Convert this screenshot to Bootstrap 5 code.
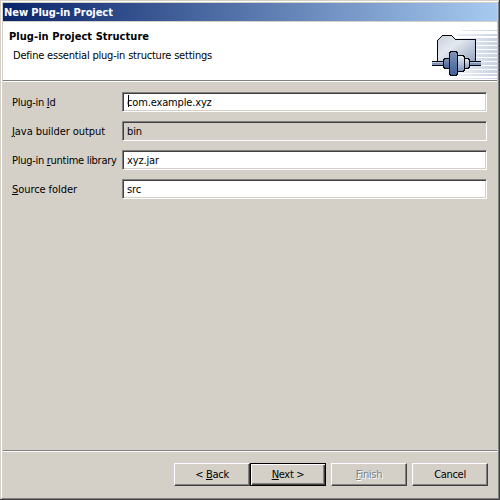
<!DOCTYPE html>
<html lang="en">
<head>
<meta charset="utf-8">
<meta name="viewport" content="width=device-width, initial-scale=1">
<title>New Plug-in Project</title>
<link rel="stylesheet" href="https://cdn.jsdelivr.net/npm/bootstrap@5.3.0/dist/css/bootstrap.min.css">
<style>
:root{--face:#d4d0c8;--shade:#808080;--dark:#404040}
body{margin:0;background:var(--face);font-family:"DejaVu Sans Condensed","DejaVu Sans",sans-serif;font-stretch:condensed;font-size:11px;line-height:14px;color:#000;letter-spacing:-.28px}
u{text-underline-offset:1px;text-decoration-thickness:1px}
.dialog{width:500px;height:500px;background:var(--face);padding:1px 0 0 1px;border-right:1px solid var(--dark);border-bottom:1px solid var(--dark)}
.dialog-inner{height:498px;border:1px solid;border-color:#fff var(--shade) var(--shade) #fff;padding:1px}
.titlebar{height:18px;background:linear-gradient(90deg,#0a246a,#a6caf0);color:#fff;font-weight:bold;padding:1px 0 0 1px;letter-spacing:-.06px}
.banner{height:59px;margin-top:1px;background:#fff;border-bottom:1px solid var(--shade);box-shadow:0 1px #fff;padding:8px 0 0 6px}
.banner h1{font-size:11px;line-height:14px;font-weight:bold;margin:0 0 5px;letter-spacing:.05px}
.banner p{margin:0 0 0 4px;letter-spacing:-.2px}
.banner svg{margin-top:-8px}
.fields{padding:11px 10px 0 9px;row-gap:9px}
.fields label{width:110px;padding-top:4px}
.fields .wide{letter-spacing:-.07px}
.fields .form-control{width:365px;height:20px;min-height:0;border-radius:0;padding:1px 0 0 4px;font-size:11px;line-height:14px;letter-spacing:-.15px;color:#000;border:1px solid;border-color:var(--shade) #fff #fff var(--shade);box-shadow:inset 1px 1px var(--dark),inset -1px -1px var(--face);background:#fff}
.fields .form-control:disabled{background:var(--face)}
.caret{left:128px;top:95px;width:1px;height:12px;background:#000}
.actions{height:47px;border-top:1px solid var(--shade);box-shadow:inset 0 1px #fff;padding:12px 9px 0 0}
.actions .btn{width:76px;height:23px;padding:0;font-size:11px;line-height:14px;letter-spacing:-.3px;border-radius:0;color:#000;background:var(--face);border:1px solid;border-color:#fff var(--dark) var(--dark) #fff;box-shadow:inset -1px -1px var(--shade)}
.actions .btn-default{border-color:#000;box-shadow:inset 1px 1px #fff,inset -1px -1px var(--dark),inset -2px -2px var(--shade)}
.actions .btn:disabled{opacity:1;color:var(--shade);text-shadow:1px 1px #fff;margin:0 5px}
</style>
</head>
<body class="overflow-hidden">
<main class="dialog"><div class="dialog-inner d-flex flex-column">
<header>
<div class="titlebar d-flex align-items-center"><span>New Plug-in Project</span></div>
<div class="banner d-flex justify-content-between">
<div><h1>Plug-in Project Structure</h1><p>Define essential plug-in structure settings</p></div>
<svg width="97" height="58" viewBox="400 22 97 58" shape-rendering="crispEdges" aria-hidden="true">
<defs>
<linearGradient id="fade" gradientUnits="userSpaceOnUse" x1="440" x2="497"><stop offset="0" stop-color="#c8d1e3" stop-opacity="0"/><stop offset="1" stop-color="#c8d1e3"/></linearGradient>
<linearGradient id="folder" x2="1" y2="1"><stop offset="0" stop-color="#c9d0dc"/><stop offset=".4" stop-color="#e4e9f0"/><stop offset="1" stop-color="#91a1bf"/></linearGradient>
<linearGradient id="plug" x2="0" y2="1"><stop offset="0" stop-color="#7f94b8"/><stop offset="1" stop-color="#3f6094"/></linearGradient>
<linearGradient id="socket" x2="0" y2="1"><stop offset="0" stop-color="#edf1f6"/><stop offset="1" stop-color="#8297bb"/></linearGradient>
</defs>
<path fill="url(#fade)" d="M462 30h35v1h-35zM457 34h40v2h-40zM450 38h47v3h-47zM446 42h51v3h-51zM442 46h55v3h-55zM440 50h57v3h-57zM440 54h57v3h-57zM440 58h57v3h-57zM440 62h57v3h-57zM440 66h57v3h-57zM442 70h55v3h-55zM447 74h50v2h-50zM455 78h42v1h-42z"/>
<path d="M437.500 62.500V40.500L442.500 35.500H451.500L455.500 39.500H475.500V62.500z" fill="url(#folder)" stroke="#05070c"/>
<path d="M432 61h49v5h-49z" fill="#05070c"/><path d="M432 62h49v3h-49z" fill="#8196b8"/><path d="M432 62h49v1h-49z" fill="#b4c1d6"/>
<g stroke="#05070c"><path d="M443.500 59.500h1v-1h5v10h-5v-1h-1z" fill="url(#plug)"/><path d="M449.500 52.500h1v-1h6v1h1v22h-1v1h-6v-1h-1z" fill="url(#plug)"/><path d="M457.500 55.500h6v1h1v14h-1v1h-6z" fill="url(#socket)"/><path d="M464.500 58.500h4v1h1v8h-1v1h-4z" fill="url(#socket)"/></g>
</svg>
</div>
</header>
<form class="fields d-flex flex-column flex-grow-1">
<div class="d-flex"><label for="pid">Plug-in <u>I</u>d</label><input class="form-control" id="pid" value="com.example.xyz"></div>
<div class="d-flex"><label class="wide" for="out"><u>J</u>ava builder output</label><input class="form-control" id="out" value="bin" disabled></div>
<div class="d-flex"><label for="lib">Plug-in <u>r</u>untime library</label><input class="form-control" id="lib" value="xyz.jar"></div>
<div class="d-flex"><label class="wide" for="src"><u>S</u>ource folder</label><input class="form-control" id="src" value="src"></div>
</form>
<span class="caret position-absolute"></span>
<footer class="actions d-flex justify-content-end">
<button type="button" class="btn">&lt; <u>B</u>ack</button>
<button type="button" class="btn btn-default"><u>N</u>ext &gt;</button>
<button type="button" class="btn" disabled><u>F</u>inish</button>
<button type="button" class="btn">Cancel</button>
</footer>
</div></main>
<script src="https://cdn.jsdelivr.net/npm/bootstrap@5.3.0/dist/js/bootstrap.bundle.min.js"></script>
</body>
</html>
